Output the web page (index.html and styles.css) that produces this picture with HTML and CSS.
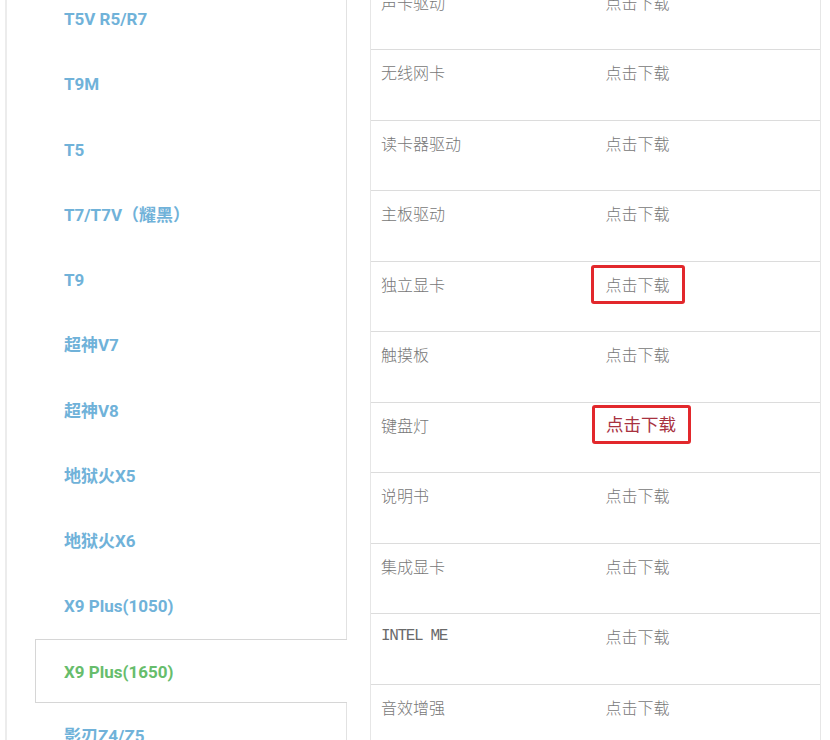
FILE: index.html
```html
<!DOCTYPE html>
<html lang="zh-CN">
<head>
<meta charset="utf-8">
<title>驱动下载</title>
<link rel="stylesheet" href="styles.css">
</head>
<body>
<div class="page">
  <ul class="models">
    <li class="model">T5V R5/R7</li>
    <li class="model">T9M</li>
    <li class="model">T5</li>
    <li class="model">T7/T7V（耀黑）</li>
    <li class="model">T9</li>
    <li class="model">超神V7</li>
    <li class="model">超神V8</li>
    <li class="model">地狱火X5</li>
    <li class="model">地狱火X6</li>
    <li class="model">X9 Plus(1050)</li>
    <li class="model active">X9 Plus(1650)</li>
    <li class="model">影刃Z4/Z5</li>
  </ul>
  <div class="drivers">
    <div class="row"><div class="cell">声卡驱动</div><div class="cell">点击下载</div></div>
    <div class="row"><div class="cell">无线网卡</div><div class="cell">点击下载</div></div>
    <div class="row"><div class="cell">读卡器驱动</div><div class="cell">点击下载</div></div>
    <div class="row"><div class="cell">主板驱动</div><div class="cell">点击下载</div></div>
    <div class="row"><div class="cell">独立显卡</div><div class="cell"><span class="mark">点击下载</span></div></div>
    <div class="row"><div class="cell">触摸板</div><div class="cell">点击下载</div></div>
    <div class="row"><div class="cell">键盘灯</div><div class="cell"><span class="mark big">点击下载</span></div></div>
    <div class="row"><div class="cell">说明书</div><div class="cell">点击下载</div></div>
    <div class="row"><div class="cell">集成显卡</div><div class="cell">点击下载</div></div>
    <div class="row"><div class="cell mono">INTEL ME</div><div class="cell">点击下载</div></div>
    <div class="row"><div class="cell">音效增强</div><div class="cell">点击下载</div></div>
  </div>
</div>
</body>
</html>
```

FILE: styles.css
```css
html, body {
  margin: 0;
  padding: 0;
  background: #ffffff;
  height: 740px;
  overflow: hidden;
}

.page {
  display: flex;
  align-items: flex-start;
  margin-top: -20.5px;
}

.models {
  list-style: none;
  margin: 0 0 0 5px;
  padding: 7px 0 0 0;
  width: 340px;
  border-left: 2px solid #ececec;
  flex: none;
}

.model {
  box-sizing: border-box;
  height: 65.25px;
  padding: 20.5px 0 0 57px;
  line-height: 24px;
  font-family: Roboto, "Noto Sans CJK SC", sans-serif;
  font-weight: 700;
  font-size: 17px;
  color: #70b2d9;
  border-right: 1px solid #e2e2e2;
}

.model.active {
  height: 64px;
  margin-left: 28px;
  padding: 19.5px 0 0 28px;
  border: 1px solid #d6d6d6;
  border-right: none;
  color: #67bd6c;
}

.drivers {
  flex: none;
  width: 449px;
  margin-left: 23px;
  border-left: 1px solid #e6e6e6;
  border-right: 1px solid #e6e6e6;
}

.row {
  box-sizing: border-box;
  height: 70.5px;
  display: grid;
  grid-template-columns: 1fr 1fr;
  border-bottom: 1px solid #dcdcdc;
}

.cell {
  padding: 10px 10px 0 10px;
  line-height: 24px;
  font-family: "Noto Sans CJK SC", sans-serif;
  font-weight: 300;
  font-size: 16px;
  color: #777777;
}

.cell.mono {
  font-family: "Liberation Mono", monospace;
  font-weight: 400;
  font-size: 16px;
  letter-spacing: -1.35px;
  color: #6a6a6a;
}

.mark {
  display: inline-block;
  vertical-align: top;
  line-height: 24px;
  padding: 4.5px 12px;
  margin: -7px 0 0 -15px;
  border: 3px solid #e2282c;
  border-radius: 3px;
}

.mark.big {
  font-size: 17.5px;
  font-weight: 400;
  color: #a8323f;
  padding: 4.5px 11.5px;
  margin: -8px 0 0 -14px;
}
```
